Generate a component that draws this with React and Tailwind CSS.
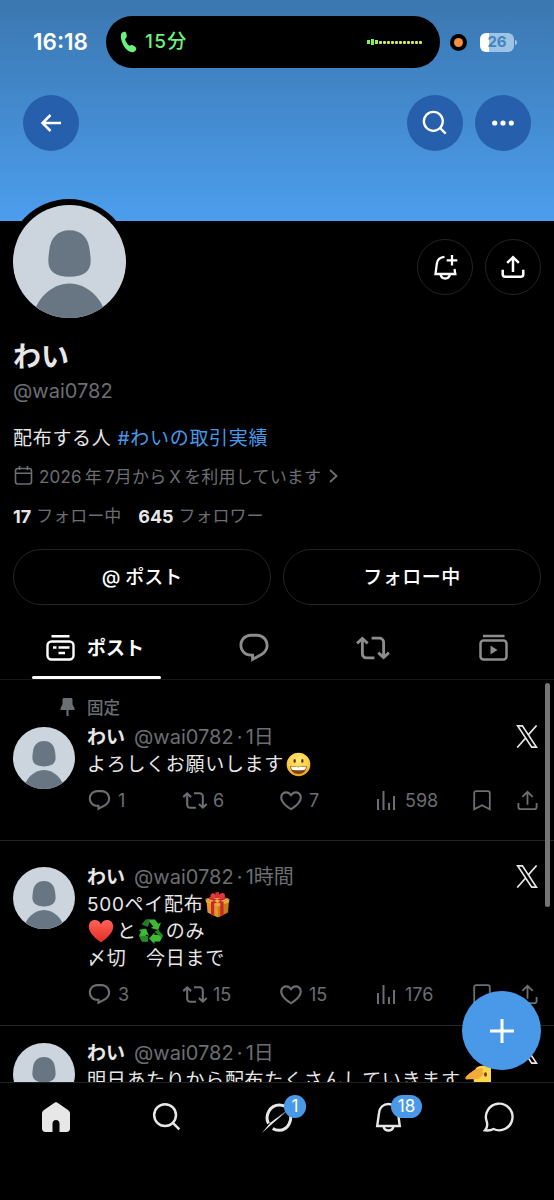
import React from 'react';
import clsx from 'clsx';

const paths = {
    reply: 'M1.751 10c0-4.42 3.584-8 8.005-8h4.366c4.49 0 8.129 3.64 8.129 8.13 0 2.96-1.607 5.68-4.196 7.11l-8.054 4.46v-3.69h-.067c-4.49.1-8.183-3.51-8.183-8.01zm8.005-6c-3.317 0-6.005 2.69-6.005 6 0 3.37 2.77 6.08 6.138 6.01l.351-.01h1.761v2.3l5.087-2.81c1.951-1.08 3.163-3.13 3.163-5.36 0-3.39-2.744-6.13-6.129-6.13H9.756z',
    repost: 'M4.5 3.88l4.432 4.14-1.364 1.46L5.5 7.55V16c0 1.1.896 2 2 2H13v2H7.5c-2.209 0-4-1.79-4-4V7.55L1.432 9.48.068 8.02 4.5 3.88zM16.5 6H11V4h5.5c2.209 0 4 1.79 4 4v8.45l2.068-1.93 1.364 1.46-4.432 4.14-4.432-4.14 1.364-1.46 2.068 1.93V8c0-1.1-.896-2-2-2z',
    like: 'M16.697 5.5c-1.222-.06-2.679.51-3.89 2.16l-.805 1.09-.806-1.09C9.984 6.01 8.526 5.44 7.304 5.5c-1.243.07-2.349.78-2.91 1.91-.552 1.12-.633 2.78.479 4.82 1.074 1.97 3.257 4.27 7.129 6.61 3.87-2.34 6.052-4.64 7.126-6.61 1.111-2.04 1.03-3.7.477-4.82-.561-1.13-1.666-1.84-2.908-1.91zm4.187 7.69c-1.351 2.48-4.001 5.12-8.379 7.67l-.503.3-.504-.3c-4.379-2.55-7.029-5.19-8.382-7.67-1.36-2.5-1.41-4.86-.514-6.67.887-1.79 2.647-2.91 4.601-3.01 1.651-.09 3.368.56 4.798 2.01 1.429-1.45 3.146-2.1 4.796-2.01 1.954.1 3.714 1.22 4.601 3.01.896 1.81.846 4.17-.514 6.67z'
};

const Glyph = ({ name, className }) => (
    <svg viewBox="0 0 24 24" fill="currentColor" className={clsx('shrink-0', className)}>
        <path d={paths[name]} />
    </svg>
);

const Line = ({ children, className, width = 2, box = '0 0 24 24' }) => (
    <svg
        viewBox={box}
        fill="none"
        stroke="currentColor"
        strokeWidth={width}
        className={clsx('shrink-0', className)}
    >
        {children}
    </svg>
);

const SearchIcon = ({ className, width }) => (
    <Line className={className} width={width} box="0 0 28 28">
        <circle cx="12.2" cy="12.2" r="10.2" />
        <path d="M19.4 19.4l6.1 6.1" />
    </Line>
);

const ShareIcon = ({ className, width }) => (
    <Line className={className} width={width}>
        <path d="M12 16.5V3M6.6 8.3L12 2.9l5.4 5.4M2.5 14.5v4.2c0 1.3 1 2.3 2.3 2.3h14.4c1.3 0 2.3-1 2.3-2.3v-4.2" />
    </Line>
);

const XLogo = ({ className }) => (
    <Line className={className} width="1.7" box="0 0 22 23">
        <path d="M1.700 .900h4.700l14 21.200h-4.700zM20.600.500l-8.300 9.400M9.700 13L1.200 22.500" />
    </Line>
);

const Avatar = ({ className }) => (
    <svg viewBox="0 0 113 113" className={clsx('shrink-0 rounded-full', className)}>
        <rect width="113" height="113" fill="#ccd5dd" />
        <path d="M56.500 25.300c12 0 19 7.500 20.300 20.500.4 4 .9 7 .9 10 0 10.500-7 16-21.200 16s-21.200-5.500-21.200-16c0-3 .5-6 .9-10 1.300-13 8.300-20.500 20.300-20.500z" fill="#687684" />
        <path d="M20 113c2-18 18-34.500 36.500-34.500S91 95 93 113z" fill="#687684" />
    </svg>
);

const Grin = () => (
    <svg viewBox="0 0 26 26" className="inline-block w-[25px] h-[25px] ml-[2px] align-[-6px]">
        <defs>
            <radialGradient id="face" cx=".5" cy=".3" r=".7">
                <stop offset="0" stopColor="#ffe979" />
                <stop offset=".7" stopColor="#fbc93d" />
                <stop offset="1" stopColor="#e99a26" />
            </radialGradient>
        </defs>
        <circle cx="13" cy="13" r="12.300" fill="url(#face)" />
        <ellipse cx="9" cy="9.300" rx="1.300" ry="2" fill="#5c3a12" />
        <ellipse cx="17" cy="9.300" rx="1.300" ry="2" fill="#5c3a12" />
        <path d="M4.500 14.500c4 1 13 1 17 0 0 5-3.500 8.300-8.500 8.300s-8.500-3.300-8.500-8.300z" fill="#7a4212" />
        <path d="M5.300 15.200c4 .9 11.400.9 15.400 0 0 1.400-.3 2.600-.9 3.300-4 .7-9.600.7-13.600 0-.6-.7-.9-1.900-.9-3.300z" fill="#fff" />
    </svg>
);

const Gift = () => (
    <svg viewBox="0 0 27 27" className="inline-block w-[27px] h-[27px] ml-[1px] -my-1 align-[-3px]">
        <path d="M2.500 9.500L14 13v13.500L3.500 21.500z" fill="#e2952a" />
        <path d="M25 9.500L14 13v13.500l10-5z" fill="#c97a1d" />
        <path d="M1.500 8L13 4l12.500 4L14 13z" fill="#f4b845" />
        <path d="M1.500 8L14 12.500v3L2 11.300zM25.500 8L14 12.500v3l11-4.200z" fill="#eda837" />
        <path d="M6.500 6.300l13 4.700v13l-3.200 1.500V12.200L3.500 7.500zM20 6l-13 5v12.500l3.200 1.500V12.500L23.500 7.300z" fill="#c8282c" />
        <path d="M13 7C9 8.500 6.500 7 6.500 5S8 1.500 10 2.500 13 5 13 7zM13.500 7c4 1.500 7.500.5 7.500-2s-2-3.500-4-2.500-3.500 2.500-3.500 4.500z" fill="#e33a3f" />
        <path d="M11.300 1.500l3.700-.5.500 6h-4z" fill="#d93036" />
    </svg>
);

const Heart = () => (
    <svg viewBox="0 0 26 26" className="inline-block w-[26px] h-[26px] mr-[3px] ml-[1px] -my-1 align-[-2px]">
        <defs>
            <linearGradient id="heart" x1="0" y1="0" x2="0" y2="1">
                <stop offset="0" stopColor="#ff6257" />
                <stop offset="1" stopColor="#e32c25" />
            </linearGradient>
        </defs>
        <path d="M13 24.500C6 19.500.800 14.500.800 8.600.800 4.600 3.500 2 6.900 2 9.500 2 12 3.500 13 6.300 14 3.500 16.500 2 19.100 2c3.400 0 6.100 2.600 6.100 6.600 0 5.900-5.200 10.900-12.200 15.900z" fill="url(#heart)" />
    </svg>
);

const Recycle = () => (
    <svg viewBox="0 0 26 26" className="inline-block w-[26px] h-[26px] ml-[1px] mr-[2px] -my-1 align-[-2px]">
        <g fill="#3cbb30">
            <path d="M8.500 1.500h8.300l3.500 4.200 2.700-1.200-2.800 7.500-7.400-2 2.500-1.400L12 4.500z" />
            <path d="M20 12l5 5.500-3 6h-5.500V26L11 20.500l5.500-6V17h4.500l-3.500-3z" />
            <path d="M9.500 23.500H4l-3-6 2-3.800L.800 12l7.200-1.500 3 7.500-2.700-1.500-1 1.500h2.700z" />
        </g>
        <path d="M7.800 1.500h4.200L10 9 3.500 6.500z" fill="#247c2a" />
        <path d="M20 12l5 5.500-1.200 2.500-7-6zM4 23.500l-3-6 6 .500h3v5.500z" fill="#248a27" />
    </svg>
);

const Salute = () => (
    <svg viewBox="0 0 27 27" className="inline-block w-[27px] h-[27px] -my-2 ml-[4px] align-[3px]">
        <path d="M11 3C14 .500 20 0 26 1v25H14C8 22 7 10 11 3z" fill="#f9d64c" />
        <ellipse cx="20.500" cy="9.500" rx="1.500" ry="2.200" fill="#6b4513" />
        <path d="M1 11.500C5 7 12 2.500 17 3.200c2 .4 1.500 2 0 2.800l2 3-5 4.500c-4 1.500-7 0-12 1-1.800.2-2-1.500-1-3z" fill="#f5aa3c" />
    </svg>
);

const RoundButton = ({ children, className }) => (
    <button className={clsx('flex h-14 w-14 items-center justify-center rounded-full', className)}>
        {children}
    </button>
);

const StatusBar = () => (
    <div className="flex h-[84px] items-center">
        <div className="ml-[33px] w-[73px] text-[22.500px] font-semibold">16:18</div>
        <div className="flex h-[52px] w-[334px] items-center rounded-full bg-black pl-[14px] pr-[18px] text-[#6cf27c]">
            <svg viewBox="0 0 17 22" className="h-[22px] w-[17px]" fill="currentColor">
                <path d="M1.200 3C2 1 4.300.300 5.500 1c1 .7 1.500 3.600 1.200 5C6.400 7.200 5 7.300 5.200 8.500c.3 2 2.300 4.900 4 6 1 .6 1.600-.6 2.800-.5 1.400.2 4 2 4.300 3.200.3 1.500-1.500 3.700-3.600 4C9.500 21.500 5 18 3 13.500 1.400 10 .200 5.700 1.200 3z" />
            </svg>
            <span className="ml-[8px] pt-px text-[19px] font-medium tracking-[1.3px]">15分</span>
            <div className="ml-auto flex items-center gap-px">
                <i className="h-[4px] w-[3px] bg-[#7ff25a]" />
                <i className="h-[6px] w-[3px] bg-[#7ff25a]" />
                <i className="h-[4px] w-[3px] bg-[#a5f050]" />
                {Array.from({ length: 11 }, (_, i) => (
                    <i key={i} className="h-[3px] w-[3px] rounded-[1px] bg-[#dbe94e]" />
                ))}
            </div>
        </div>
        <div className="ml-[10px] flex h-[17px] w-[17px] items-center justify-center rounded-full bg-black">
            <div className="h-[9px] w-[9px] rounded-full bg-[#f3913d]" />
        </div>
        <div className="ml-[13px] flex h-[19px] w-[34px] items-center justify-center rounded-[6px] bg-linear-to-r from-white from-27% to-[#9dc3e5] to-27% text-[15px] font-bold text-[#4384c0]">26</div>
        <div className="ml-[1px] h-[5px] w-[2px] rounded-r-full bg-[#9dc3e5]" />
    </div>
);

const Stat = ({ icon, value, className }) => (
    <div className={clsx('flex items-center', className)}>
        {icon}
        <span className="pt-px">{value}</span>
    </div>
);

const Post = ({ pinned, time, children, stats, className }) => (
    <div className={clsx('border-b border-[#222426]', className)}>
        {pinned && (
            <div className="mb-[5px] flex h-[22px] items-center pl-[60px] text-[16.500px] font-medium text-[#6b6e72]">
                <svg viewBox="0 0 15 18" className="mr-[12px] h-[18px] w-[15px]" fill="currentColor">
                    <path d="M4 0h7c.9 0 1.500.6 1.500 1.500v5l2 3.500v2H8.500v6h-2v-6h-6v-2l2-3.500v-5C2.500.6 3.100 0 4 0z" />
                </svg>
                <span className="pt-[2px]">固定</span>
            </div>
        )}
        <div className="flex pl-[13px]">
            <Avatar className="mt-[4px] h-[62px] w-[62px]" />
            <div className="ml-3 flex-1">
                <div className="flex h-[27px] items-center">
                    <span className="pt-[3px] text-[19px] font-bold">わい</span>
                    <span className="ml-[9px] whitespace-pre text-[20px] text-[#6b6e72] [word-spacing:-2.5px]">@wai0782 · {time}</span>
                    <XLogo className="ml-auto mr-[16px] h-[23px] w-[22px]" />
                </div>
                <div className="whitespace-pre pt-px text-[19px] leading-[27px] tracking-[0.7px]">{children}</div>
                <div className="mt-[10px] flex h-6 items-center text-[18px] text-[#6b6e72]">
                    <Stat className="w-[95px]" value={stats[0]} icon={<Glyph name="reply" className="mr-[6px] h-[25px] w-[25px]" />} />
                    <Stat className="w-[96px]" value={stats[1]} icon={<Glyph name="repost" className="mr-[5px] h-[25px] w-[26px]" />} />
                    <Stat className="w-[99px]" value={stats[2]} icon={<Glyph name="like" className="mr-[5px] h-[27px] w-[26px]" />} />
                    <Stat
                        className="w-[96px]"
                        value={stats[3]}
                        icon={
                            <Line className="mr-[9px] h-[20px] w-[19px]" box="0 0 19 20" width="2">
                                <path d="M1 9v11M6.500 1v19M12 13v7M17 6v14" />
                            </Line>
                        }
                    />
                    <Line className="h-[21px] w-[18px]" box="0 0 18 21" width="1.800">
                        <path d="M1.200 19.300V3.200c0-1.200.8-2 2-2h11.600c1.200 0 2 .8 2 2v16.100L9 15.200z" />
                    </Line>
                    <ShareIcon className="ml-[25px] h-[23px] w-[23px]" width="1.900" />
                </div>
            </div>
        </div>
    </div>
);

const Badge = ({ children, className }) => (
    <span className={clsx('absolute flex h-[23px] items-center justify-center rounded-full bg-[#4a99e9] text-[17px] text-white', className)}>
        {children}
    </span>
);

const App = () => {
    return (
        <div className="relative flex h-[1200px] w-[554px] flex-col overflow-hidden bg-black font-['Inter','Noto_Sans_CJK_JP',sans-serif] text-[#e7e7e8]">
            {/* Banner */}
            <div className="h-[221px] shrink-0 bg-linear-to-b from-[#3b77b0] to-[#4c9eee] text-white">
                <StatusBar />
                <div className="mt-[11px] flex pl-[23px] pr-[23px]">
                    <RoundButton className="bg-[#265fab]">
                        <Line className="h-[20px] w-[20px]" box="0 0 20 20" width="2.500">
                            <path d="M20 10H1.500M9.500 2l-8 8 8 8" />
                        </Line>
                    </RoundButton>
                    <RoundButton className="ml-auto bg-[#265fab]">
                        <SearchIcon className="h-[26px] w-[26px]" width="2.500" />
                    </RoundButton>
                    <RoundButton className="ml-3 bg-[#265fab]">
                        <svg viewBox="0 0 22 6" className="h-[6px] w-[22px]" fill="currentColor">
                            <circle cx="2.700" cy="3" r="2.600" />
                            <circle cx="11" cy="3" r="2.600" />
                            <circle cx="19.300" cy="3" r="2.600" />
                        </svg>
                    </RoundButton>
                </div>
            </div>

            {/* Profile */}
            <div className="shrink-0 px-[13px]">
                <div className="flex h-[102px]">
                    <div className="relative -ml-[6px] -mt-[22px] h-[124px] w-[124px] rounded-full bg-black p-[5.500px]">
                        <Avatar className="h-[113px] w-[113px]" />
                    </div>
                    <RoundButton className="ml-auto mt-[18px] border border-[#242424] text-white">
                        <Line className="h-[26px] w-[26px]" box="0 0 26 26" width="2.300">
                            <path d="M12.500 2.800C8 3 5.200 6 4.800 9.800L3.500 20h19.800l-.8-5M8.500 20.500c.5 2.300 2.300 4 4.700 4s4.200-1.700 4.700-4M20 1v10.600M14.700 6.300h10.600" />
                        </Line>
                    </RoundButton>
                    <RoundButton className="ml-3 mt-[18px] border border-[#242424] text-white">
                        <ShareIcon className="h-[26px] w-[26px]" width="2.300" />
                    </RoundButton>
                </div>
                <h1 className="mt-[16px] h-[35px] text-[28px] font-bold leading-[36px]">わい</h1>
                <div className="mt-1 h-[26px] text-[20px] leading-[26px] text-[#6b6e72]">@wai0782</div>
                <div className="mt-[21px] h-[27px] whitespace-pre text-[19px] leading-7 tracking-[0.7px]">
                    配布する人 <span className="text-[#4a99e9]">#わいの取引実績</span>
                </div>
                <div className="mt-3 flex h-6 items-center text-[17px] text-[#6b6e72]">
                    <Line className="ml-[1px] mr-[6px] h-[20px] w-[19px]" box="0 0 19 20" width="1.600">
                        <rect x="1.500" y="2.500" width="16" height="15.500" rx="2.500" />
                        <path d="M1.500 7.300h16M5.500 0v4M13.500 0v4" />
                    </Line>
                    <span className="whitespace-nowrap pt-[3px] tracking-[0.2px] [word-spacing:-2px]">2026 年 7月から X を利用しています</span>
                    <Line className="ml-[8px] h-[14px] w-[9px]" box="0 0 9 14" width="1.900">
                        <path d="M1 1l6.500 6L1 13" />
                    </Line>
                </div>
                <div className="mt-4 flex h-6 items-center text-[17px] text-[#6b6e72]">
                    <b className="mr-[5px] text-[18px] text-[#e7e7e8]">17</b>
                    <span className="pt-[2px]">フォロー中</span>
                    <b className="ml-[17px] mr-[5px] text-[18px] text-[#e7e7e8]">645</b>
                    <span className="pt-[2px]">フォロワー</span>
                </div>
                <div className="mt-[21px] flex gap-3 text-[19px] font-medium text-white">
                    <button className="h-14 flex-1 rounded-full border border-[#242424] pt-[3px]">@ ポスト</button>
                    <button className="h-14 flex-1 rounded-full border border-[#242424] pt-[3px] tracking-[0.5px]">フォロー中</button>
                </div>
            </div>

            {/* Tabs */}
            <div className="flex h-[75px] shrink-0 border-b border-[#16181a] text-[#8d8d8f]">
                <div className="relative ml-8 flex w-[129px] items-center justify-center pr-[3px] pt-[11px] text-white">
                    <Line className="mr-[12px] h-[27px] w-[29px]" box="0 0 29 27" width="2.400">
                        <rect x="1.500" y="7.500" width="26" height="18" rx="4" />
                        <path d="M5.500 2.200h18M12.500 13.500h11M12.500 19h6.500M7 13.500h3.500" />
                    </Line>
                    <span className="pt-[3px] text-[19px] font-bold">ポスト</span>
                    <div className="absolute bottom-0 left-0 h-[3px] w-full rounded-full bg-white" />
                </div>
                <div className="ml-[33px] flex w-[119px] items-center justify-center pt-[11px]">
                    <Glyph name="reply" className="h-[34px] w-[34px]" />
                </div>
                <div className="flex w-[120px] items-center justify-center pt-[11px]">
                    <Glyph name="repost" className="h-[34px] w-[34px]" />
                </div>
                <div className="flex w-[120px] items-center justify-center pt-[11px]">
                    <Line className="h-[27px] w-[29px]" box="0 0 29 27" width="2.500">
                        <rect x="1.500" y="6.500" width="26" height="19" rx="3" />
                        <path d="M4 2h21.500" />
                        <path d="M11.500 11.500v9l7-4.500z" fill="currentColor" stroke="none" />
                    </Line>
                </div>
            </div>

            {/* Timeline */}
            <div className="h-[402px] shrink-0 overflow-hidden">
                <Post pinned time="1日" stats={['1', '6', '7', '598']} className="h-[161px] pt-4">
                    よろしくお願いします<Grin />
                </Post>
                <Post time="1時間" stats={['3', '15', '15', '176']} className="h-[185px] pt-[22px]">
                    <p className="h-[27px]">500ペイ配布<Gift /></p>
                    <p className="h-[27px]"><Heart />と<Recycle />のみ</p>
                    <p className="h-[27px]">〆切　今日まで</p>
                </Post>
                <Post time="1日" stats={['', '', '', '']} className="pt-[13px]">
                    明日あたりから配布たくさんしていきます<Salute />
                </Post>
            </div>

            {/* Bottom navigation */}
            <div className="flex h-[118px] border-t border-[#202224] pt-[18px]">
                <div className="flex h-8 w-[111px] items-center justify-center">
                    <svg viewBox="0 0 28 30" className="h-[30px] w-[28px]" fill="currentColor">
                        <path d="M12.500.700c.9-.6 2.100-.6 3 0L26 8c1.200.8 2 2 2 3.500v15c0 2-1.500 3.500-3.500 3.500h-7v-8.500c0-2-1.500-3.500-3.500-3.500s-3.500 1.500-3.500 3.500V30h-7C1.500 30 0 28.500 0 26.500v-15C0 10 .800 8.800 2 8z" />
                    </svg>
                </div>
                <div className="flex h-8 w-[111px] items-center justify-center">
                    <SearchIcon className="h-[30px] w-[30px]" width="2.300" />
                </div>
                <div className="relative flex h-8 w-[111px] items-center justify-center">
                    <svg viewBox="0 0 32 32" className="h-[32px] w-[32px]" fill="none">
                        <path d="M6.500 22.500C2.500 15 7.500 4 17.500 4c3 0 5.500 1 7.500 2.500M27.200 10c4.300 9-1.200 19.300-10.200 19.300-2.500 0-4.500-.6-6.200-1.800" stroke="currentColor" strokeWidth="3" />
                        <path d="M0 32l8.500-10.500L31 5 14 18.500 24 11 9.500 23.500z" fill="currentColor" />
                    </svg>
                    <Badge className="left-[62px] top-[-6px] w-[22px]">1</Badge>
                </div>
                <div className="relative flex h-8 w-[111px] items-center justify-center">
                    <Line className="h-[30px] w-[27px]" box="0 0 27 30" width="2.400">
                        <path d="M2.200 24l1.800-13C4.600 5.500 8.500 2 13.500 2S22.400 5.500 23 11l1.800 13zM8.500 24.500c.5 2.300 2.400 4 5 4s4.500-1.700 5-4" />
                    </Line>
                    <Badge className="left-[58px] top-[-6px] w-[31px]">18</Badge>
                </div>
                <div className="flex h-8 w-[110px] items-center justify-center">
                    <Line className="h-[30px] w-[32px]" box="0 0 32 30" width="2.400">
                        <path d="M3.800 19.800A13.300 13.300 0 1 1 10.500 27c-2.500 1.400-5 1.700-8.500 1.300 1.800-2 2.800-5 1.800-8.500z" />
                    </Line>
                </div>
            </div>

            {/* Scroll thumb and compose button float over the timeline */}
            <div className="absolute left-[545px] top-[683px] h-[224px] w-[4.500px] rounded-full bg-[#747474]" />
            <button className="absolute left-[462px] top-[991px] flex h-[79px] w-[79px] items-center justify-center rounded-full bg-[#4a99e9] text-white">
                <Line className="h-[24px] w-[24px]" width="3">
                    <path d="M12 0v24M0 12h24" />
                </Line>
            </button>
        </div>
    );
};

export default App;
